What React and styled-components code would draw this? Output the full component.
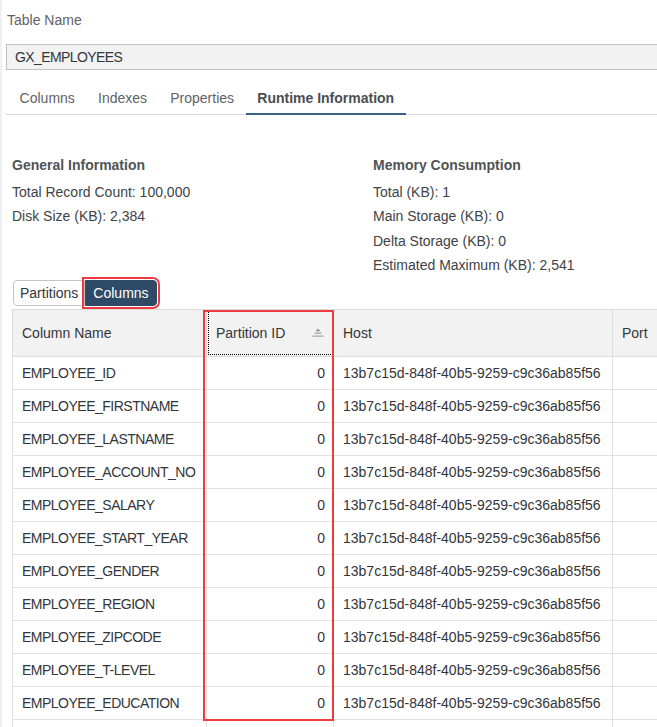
import React from "react";
import styled, { createGlobalStyle } from "styled-components";

const GlobalStyle = createGlobalStyle`
  html, body {
    margin: 0;
    padding: 0;
    background: #ffffff;
    overflow: hidden;
  }
  body {
    font-family: "Liberation Sans", Arial, sans-serif;
    font-size: 14px;
    color: #32363a;
  }
`;

const rows = [
  "EMPLOYEE_ID",
  "EMPLOYEE_FIRSTNAME",
  "EMPLOYEE_LASTNAME",
  "EMPLOYEE_ACCOUNT_NO",
  "EMPLOYEE_SALARY",
  "EMPLOYEE_START_YEAR",
  "EMPLOYEE_GENDER",
  "EMPLOYEE_REGION",
  "EMPLOYEE_ZIPCODE",
  "EMPLOYEE_T-LEVEL",
  "EMPLOYEE_EDUCATION",
];

const HOST = "13b7c15d-848f-40b5-9259-c9c36ab85f56";

function SortIcon() {
  return (
    <svg width="12" height="9" viewBox="0 0 12 9">
      <polygon points="6,0.5 3.6,3.2 8.4,3.2" fill="#8e8e8e" />
      <rect x="2.5" y="4.6" width="7" height="1" fill="#8e8e8e" />
      <rect x="0.5" y="7.6" width="11" height="1" fill="#8e8e8e" />
    </svg>
  );
}

export default function App() {
  return (
    <Page>
      <GlobalStyle />
      <Header>
        <FieldLabel>Table Name</FieldLabel>
        <NameField>GX_EMPLOYEES</NameField>
        <TabBar>
          <Tab>Columns</Tab>
          <Tab>Indexes</Tab>
          <Tab>Properties</Tab>
          <Tab $active>Runtime Information</Tab>
        </TabBar>
      </Header>

      <Content>
        <InfoGrid>
          <InfoBlock>
            <InfoTitle>General Information</InfoTitle>
            <InfoLine>Total Record Count: 100,000</InfoLine>
            <InfoLine>Disk Size (KB): 2,384</InfoLine>
          </InfoBlock>
          <InfoBlock>
            <InfoTitle>Memory Consumption</InfoTitle>
            <InfoLine>Total (KB): 1</InfoLine>
            <InfoLine>Main Storage (KB): 0</InfoLine>
            <InfoLine>Delta Storage (KB): 0</InfoLine>
            <InfoLine>Estimated Maximum (KB): 2,541</InfoLine>
          </InfoBlock>
        </InfoGrid>

        <Segmented>
          <SegButton>Partitions</SegButton>
          <SegButton $selected>Columns</SegButton>
        </Segmented>

        <TableWrap>
          <Table>
            <colgroup>
              <col style={{ width: 194 }} />
              <col style={{ width: 127 }} />
              <col style={{ width: 279 }} />
              <col style={{ width: 120 }} />
            </colgroup>
            <thead>
              <tr>
                <HeadCell>Column Name</HeadCell>
                <HeadCell $focused>
                  <HeadInner>
                    Partition ID
                    <SortIcon />
                  </HeadInner>
                </HeadCell>
                <HeadCell>Host</HeadCell>
                <HeadCell>Port</HeadCell>
              </tr>
            </thead>
            <tbody>
              {rows.map((name) => (
                <tr key={name}>
                  <Cell $caps>{name}</Cell>
                  <Cell $align="right">0</Cell>
                  <Cell>{HOST}</Cell>
                  <Cell />
                </tr>
              ))}
              <tr>
                <Cell />
                <Cell />
                <Cell />
                <Cell />
              </tr>
            </tbody>
          </Table>
          <ColumnMark />
        </TableWrap>
      </Content>
    </Page>
  );
}

const Page = styled.div`
  width: 760px;
  min-height: 100vh;
  border-left: 2px solid #edf0f5;
  box-sizing: border-box;
`;

const Header = styled.div`
  padding: 12px 0 0 4px;
`;

const FieldLabel = styled.div`
  margin-left: 1px;
  line-height: 16px;
  color: #5f6266;
`;

const NameField = styled.div`
  margin-top: 16px;
  height: 26px;
  box-sizing: border-box;
  padding: 0 8px;
  display: flex;
  align-items: center;
  background: #f2f2f2;
  border: 1px solid #bfbfbf;
  border-right: none;
  color: #32363a;
  letter-spacing: -0.6px;
`;

const TabBar = styled.div`
  margin-top: 10px;
  padding-left: 2px;
  display: flex;
  border-bottom: 1px solid #d9d9d9;
`;

const Tab = styled.div`
  padding: 10px 11.6px 7px;
  line-height: 16px;
  margin-bottom: -1px;
  border-bottom: 2px solid ${(p) => (p.$active ? "#366288" : "transparent")};
  color: ${(p) => (p.$active ? "#4b4e52" : "#5f6266")};
  font-weight: ${(p) => (p.$active ? 700 : 400)};
`;

const Content = styled.div`
  padding: 42px 0 0 10px;
`;

const InfoGrid = styled.div`
  display: grid;
  grid-template-columns: 361px auto;
`;

const InfoBlock = styled.div`
  display: flex;
  flex-direction: column;
`;

const InfoTitle = styled.div`
  line-height: 16px;
  font-weight: 700;
  color: #505356;
  margin-bottom: 7px;
`;

const InfoLine = styled.div`
  line-height: 24.4px;
  color: #404346;
`;

const Segmented = styled.div`
  display: flex;
  margin: 2px 0 0 1px;
`;

const SegButton = styled.div`
  height: 26px;
  box-sizing: border-box;
  display: flex;
  align-items: center;
  padding: 0 ${(p) => (p.$selected ? "7px" : "6px")};
  border: 1px solid ${(p) => (p.$selected ? "#2e4a66" : "#c4c4c4")};
  border-radius: ${(p) => (p.$selected ? "0 4px 4px 0" : "4px 0 0 4px")};
  background: ${(p) => (p.$selected ? "#2e4a66" : "#ffffff")};
  color: ${(p) => (p.$selected ? "#ffffff" : "#32363a")};
  outline: ${(p) => (p.$selected ? "2px solid #ef3b3f" : "none")};
  outline-offset: 1px;
`;

const TableWrap = styled.div`
  position: relative;
  margin-top: 3px;
`;

const Table = styled.table`
  border-collapse: collapse;
  table-layout: fixed;
  width: 720px;
  border-top: 1px solid #dcdcdc;
  border-left: 1px solid #dcdcdc;
`;

const HeadCell = styled.th`
  height: 46px;
  padding: 0 9px;
  background: #f2f2f2;
  border: 1px solid #dcdcdc;
  text-align: left;
  font-weight: 400;
  color: #32363a;
  outline: ${(p) => (p.$focused ? "1px dotted #000000" : "none")};
  outline-offset: -2px;
`;

const HeadInner = styled.div`
  display: flex;
  align-items: center;
  justify-content: space-between;
`;

const Cell = styled.td`
  height: 32px;
  padding: 0 ${(p) => (p.$align === "right" ? "8px" : "9px")};
  border: 1px solid #e2e2e2;
  text-align: ${(p) => p.$align || "left"};
  color: #32363a;
  white-space: nowrap;
  letter-spacing: ${(p) => (p.$caps ? "-0.5px" : "normal")};
`;

const ColumnMark = styled.div`
  position: absolute;
  left: 191px;
  top: 1px;
  width: 131px;
  height: 411px;
  box-sizing: border-box;
  border: 2px solid #ef3b3f;
  pointer-events: none;
`;
